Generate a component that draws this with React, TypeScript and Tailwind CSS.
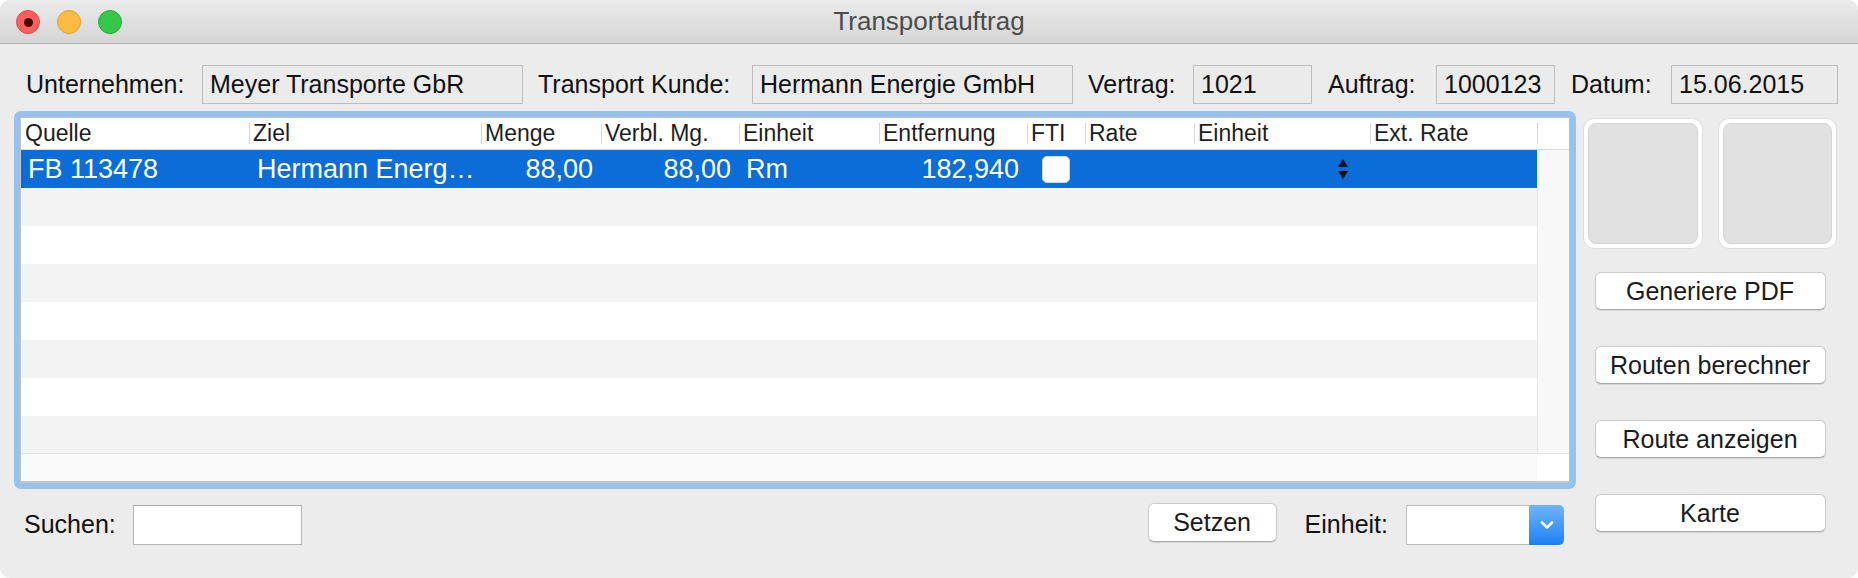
import React from 'react';

type Col = { name: string; w: string };

const cols: Col[] = [
  { name: 'Quelle', w: 'w-[228px]' },
  { name: 'Ziel', w: 'w-[232px]' },
  { name: 'Menge', w: 'w-[120px]' },
  { name: 'Verbl. Mg.', w: 'w-[138px]' },
  { name: 'Einheit', w: 'w-[140px]' },
  { name: 'Entfernung', w: 'w-[148px]' },
  { name: 'FTI', w: 'w-[58px]' },
  { name: 'Rate', w: 'w-[109px]' },
  { name: 'Einheit', w: 'w-[176px]' },
  { name: 'Ext. Rate', w: 'w-[167px]' },
];

const Field: React.FC<{ label: string; labelW: string; boxW: string; value: string; className?: string }> = ({
  label,
  labelW,
  boxW,
  value,
  className = '',
}) => (
  <div className={`flex items-center ${className}`}>
    <div className={`${labelW} shrink-0`}>{label}</div>
    <div className={`${boxW} shrink-0 h-[39px] border border-[#bdbdbd] bg-[#ebebeb] pl-[7px] flex items-center`}>
      {value}
    </div>
  </div>
);

const MacButton: React.FC<{ children: React.ReactNode; className?: string }> = ({ children, className = '' }) => (
  <button
    className={`h-[38px] rounded-[6px] bg-white border border-[#cbcbcb] border-b-[#aaaaaa] shadow-[0_1px_1px_rgba(0,0,0,0.10)] text-[25px] leading-none text-[#1c1c1c] ${className}`}
  >
    {children}
  </button>
);

const ImageWell = () => (
  <div className="w-[120px] h-[131px] rounded-[11px] bg-white border border-[#dedede] p-[4px]">
    <div className="w-full h-full rounded-[8px] bg-[#e1e1e1] border border-[#d6d6d6]" />
  </div>
);

const App: React.FC = () => {
  return (
    <div className="w-[1858px] h-[578px] bg-white font-['Liberation_Sans',Arial,sans-serif] text-[25px] text-[#111]">
      <div className="w-full h-full rounded-[10px] overflow-hidden bg-[#ececec]">
        {/* Title bar */}
        <div className="h-[44px] border-b border-[#b3b3b3] bg-linear-to-b from-[#ebebeb] to-[#d5d5d5] grid grid-cols-[1fr_auto_1fr] items-center">
          <div className="flex items-center gap-[17px] pl-[16px] pt-[1px]">
            <div className="w-[24px] h-[24px] rounded-full bg-[#fc605c] border border-[#de4a45] flex items-center justify-center">
              <div className="w-[9px] h-[9px] rounded-full bg-[#4a0002]" />
            </div>
            <div className="w-[24px] h-[24px] rounded-full bg-[#fdbc40] border border-[#dea034]" />
            <div className="w-[24px] h-[24px] rounded-full bg-[#34c84a] border border-[#27aa35]" />
          </div>
          <div className="text-[26px] text-[#4b4b4b]">Transportauftrag</div>
          <div />
        </div>

        {/* Header fields */}
        <div className="flex items-center mt-[21px] pl-[26px] h-[39px]">
          <Field label="Unternehmen:" labelW="w-[176px]" boxW="w-[321px]" value="Meyer Transporte GbR" />
          <Field label="Transport Kunde:" labelW="w-[214px]" boxW="w-[321px]" value="Hermann Energie GmbH" className="ml-[15px]" />
          <Field label="Vertrag:" labelW="w-[105px]" boxW="w-[119px]" value="1021" className="ml-[15px]" />
          <Field label="Auftrag:" labelW="w-[108px]" boxW="w-[119px]" value="1000123" className="ml-[16px]" />
          <Field label="Datum:" labelW="w-[100px]" boxW="w-[167px]" value="15.06.2015" className="ml-[16px]" />
        </div>

        <div className="flex mt-[7px] pl-[14px]">
          {/* Left: table + bottom controls */}
          <div className="w-[1562px] shrink-0">
            <div className="border-[6px] border-[#96c2ee] rounded-[7px]">
              <div className="border border-[#c2c2c2] border-b-2 border-b-[#c6c6c6] bg-white">
                {/* Header */}
                <div className="h-[32px] flex border-b border-[#dcdcdc] text-[23px] text-[#1e1e1e]">
                  {cols.map((c, i) => (
                    <div key={i} className={`${c.w} shrink-0 flex items-center h-full`}>
                      {i > 0 && <span className="w-px h-[21px] bg-[#d9d9d9] shrink-0" />}
                      <span className={i > 0 ? 'pl-[3px]' : 'pl-[4px]'}>{c.name}</span>
                    </div>
                  ))}
                  <div className="flex-1 flex items-center h-full">
                    <span className="w-px h-[21px] bg-[#d9d9d9]" />
                  </div>
                </div>

                {/* Body */}
                <div className="h-[303px] flex overflow-hidden">
                  <div className="w-[1516px] shrink-0">
                    <div className="h-[38px] flex items-center bg-[#0b6dd7] text-white text-[27px]">
                      <div className="w-[228px] shrink-0 pl-[7px]">FB 113478</div>
                      <div className="w-[232px] shrink-0 pl-[8px] whitespace-nowrap">Hermann Energ…</div>
                      <div className="w-[120px] shrink-0 pr-[8px] text-right">88,00</div>
                      <div className="w-[138px] shrink-0 pr-[8px] text-right">88,00</div>
                      <div className="w-[140px] shrink-0 pl-[7px]">Rm</div>
                      <div className="w-[148px] shrink-0 pr-[8px] text-right">182,940</div>
                      <div className="w-[58px] shrink-0 flex justify-center">
                        <div className="w-[28px] h-[27px] rounded-[5px] bg-white border border-[#d8d8d8]" />
                      </div>
                      <div className="w-[109px] shrink-0" />
                      <div className="w-[176px] shrink-0 flex justify-end pr-[22px]">
                        <svg width="10" height="22" viewBox="0 0 10 22">
                          <polygon points="0,9 5,1 10,9" fill="#111" />
                          <polygon points="0,13 10,13 5,21" fill="#111" />
                        </svg>
                      </div>
                      <div className="w-[167px] shrink-0" />
                    </div>
                    {[1, 2, 3, 4, 5, 6, 7].map((r) => (
                      <div key={r} className={`h-[38px] ${r % 2 === 1 ? 'bg-[#f3f3f3]' : 'bg-white'}`} />
                    ))}
                  </div>
                  <div className="flex-1 bg-[#f8f8f8] border-l border-[#e6e6e6]" />
                </div>

                {/* Horizontal scroller */}
                <div className="h-[28px] flex border-t border-[#e4e4e4]">
                  <div className="w-[1516px] shrink-0 bg-[#f9f9f9]" />
                  <div className="flex-1 bg-white" />
                </div>
              </div>
            </div>

            {/* Bottom controls */}
            <div className="flex items-center h-[44px] mt-[14px] pl-[10px] pr-[12px]">
              <span>Suchen:</span>
              <div className="ml-[17px] w-[169px] h-[40px] bg-white border border-[#b5b5b5] border-t-[#a9a9a9]" />
              <MacButton className="ml-auto w-[129px] self-start h-[39px]">Setzen</MacButton>
              <span className="ml-[28px]">Einheit:</span>
              <div className="ml-[18px] flex h-[40px]">
                <div className="w-[123px] h-full bg-white border border-[#bdbdbd] border-r-0" />
                <div className="w-[35px] h-full rounded-r-[5px] bg-linear-to-b from-[#6db5fb] to-[#1680f6] flex items-center justify-center">
                  <svg width="16" height="12" viewBox="0 0 16 12">
                    <path d="M3 3.5 L8 8.5 L13 3.5" fill="none" stroke="white" strokeWidth="2.6" strokeLinecap="round" strokeLinejoin="round" />
                  </svg>
                </div>
              </div>
            </div>
          </div>

          {/* Right column */}
          <div className="ml-[7px] w-[254px] shrink-0 pt-[7px] flex flex-col items-center">
            <div className="flex gap-[15px] w-full">
              <ImageWell />
              <ImageWell />
            </div>
            <MacButton className="w-[231px] mt-[23px]">Generiere PDF</MacButton>
            <MacButton className="w-[231px] mt-[36px]">Routen berechner</MacButton>
            <MacButton className="w-[231px] mt-[36px]">Route anzeigen</MacButton>
            <MacButton className="w-[231px] mt-[36px]">Karte</MacButton>
          </div>
        </div>
      </div>
    </div>
  );
};

export default App;
